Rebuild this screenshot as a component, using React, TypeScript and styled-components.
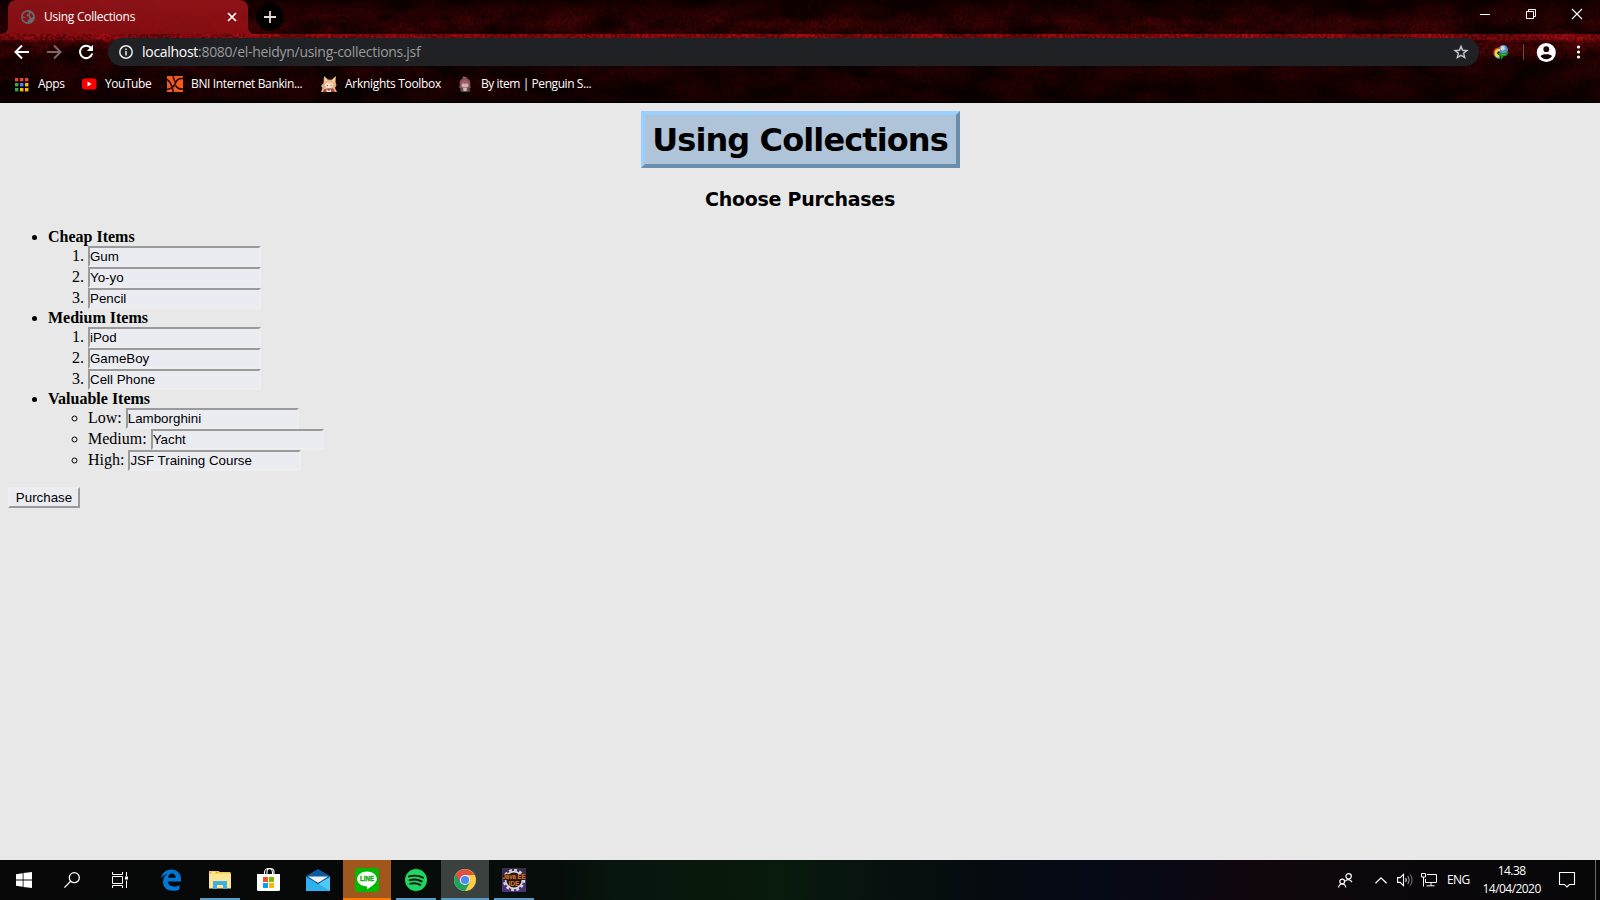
import React from 'react';
import styled, { createGlobalStyle, css } from 'styled-components';

const ui = `'Open Sans', 'Noto Sans', sans-serif`;

const GlobalStyle = createGlobalStyle`
  html, body { margin: 0; padding: 0; background: #e8e8e8; overflow: hidden; }
`;

const Screen = styled.div`
  width: 1600px;
  height: 900px;
  display: flex;
  flex-direction: column;
  overflow: hidden;
`;

/* ---------- browser frame ---------- */

const Chrome = styled.header`
  position: relative;
  isolation: isolate;
  height: 103px;
  flex: none;
  display: flex;
  flex-direction: column;
  background: linear-gradient(#1c0001 0, #440405 22px, #3c0304 34px, #a80d13 34px, #a00c12 39px, #5c0507 43px, #2e0203 60px, #220102 101px, #000 102px);
  color: #fff;
  font-family: ${ui};
`;

const Texture = styled.svg`
  position: absolute;
  inset: 0;
  z-index: -1;
  width: 1600px;
  height: 103px;
`;

const TabStrip = styled.div`
  height: 34px;
  display: flex;
  align-items: flex-start;
  padding-left: 8px;
`;

const Tab = styled.div`
  position: relative;
  box-sizing: border-box;
  width: 240px;
  height: 34px;
  padding: 0 10px 0 13px;
  display: flex;
  align-items: center;
  border-radius: 8px 8px 0 0;
  background: linear-gradient(rgba(172, 24, 29, 0.78), rgba(160, 16, 21, 0.76));
  &::before,
  &::after {
    content: '';
    position: absolute;
    bottom: 0;
    width: 6px;
    height: 6px;
  }
  &::before {
    left: -6px;
    background: radial-gradient(circle at 0 0, transparent 5.5px, #840e12 6px);
  }
  &::after {
    right: -6px;
    background: radial-gradient(circle at 100% 0, transparent 5.5px, #840e12 6px);
  }
`;

const Label = styled.span<{ $size?: number; $track?: number; $gap?: number }>`
  font-size: ${(p) => p.$size ?? 12}px;
  letter-spacing: ${(p) => p.$track ?? 0}px;
  margin-left: ${(p) => p.$gap ?? 9}px;
  line-height: 16px;
  white-space: nowrap;
`;

const Icon = styled.svg`
  display: block;
  flex: none;
  overflow: visible;
`;

const Grow = styled.div`
  flex: 1;
`;

const NewTab = styled.div`
  width: 28px;
  height: 28px;
  margin: 3px 0 0 8px;
  border-radius: 50%;
  background: #050000;
  display: grid;
  place-items: center;
`;

const WindowButtons = styled.div`
  display: flex;
  height: 28px;
  > div {
    width: 46px;
    display: grid;
    place-items: center;
  }
`;

const Toolbar = styled.div`
  height: 36px;
  display: flex;
  align-items: center;
  padding-left: 14px;
`;

const NavIcons = styled.div`
  display: flex;
  gap: 16px;
  width: 94px;
`;

const Omnibox = styled.div`
  box-sizing: border-box;
  width: 1371px;
  height: 28px;
  border-radius: 14px;
  padding: 0 11px;
  background: #202124;
  display: flex;
  align-items: center;
  em {
    font-style: normal;
    color: #9a9b9d;
  }
`;

const ToolbarEnd = styled.div`
  display: flex;
  align-items: center;
  padding-left: 14px;
`;

const Divider = styled.i`
  width: 1px;
  height: 16px;
  margin: 0 13px 0 14px;
  background: #6b4a4c;
`;

const Bookmarks = styled.nav`
  height: 28px;
  display: flex;
  align-items: center;
  padding-left: 15px;
`;

const Bookmark = styled.div<{ $width: number }>`
  display: flex;
  align-items: center;
  width: ${(p) => p.$width}px;
`;

/* ---------- page ---------- */

const Page = styled.main`
  box-sizing: border-box;
  height: 757px;
  padding: 8px;
  background: #e8e8e8;
  color: #000;
  font: 16px/18px 'Liberation Serif', 'Times New Roman', serif;
`;

const Title = styled.h1`
  box-sizing: border-box;
  width: 319px;
  height: 57px;
  margin: 0 auto;
  border: 4px solid;
  border-color: #9bcfff #6c8ead #6c8ead #9bcfff;
  background: #b0c4d9;
  font: bold 32px/51px 'DejaVu Sans', Verdana, sans-serif;
  letter-spacing: -0.9px;
  text-align: center;
  white-space: nowrap;
`;

const Subtitle = styled.h2`
  margin: 19px 0 17px;
  font: bold 19px/24px 'DejaVu Sans', Verdana, sans-serif;
  letter-spacing: -0.27px;
  text-align: center;
`;

const Groups = styled.ul`
  margin: 0 0 16px;
  padding-left: 40px;
  list-style: disc;
`;

const nested = css`
  margin: 0;
  padding-left: 40px;
  font-weight: normal;
`;
const Numbered = styled.ol`
  ${nested}
`;
const Circled = styled.ul`
  ${nested}
  list-style: circle;
`;

const GroupName = styled.b`
  display: block;
  height: 18px;
`;

const Row = styled.li`
  height: 21px;
  line-height: 20px;
`;

const Field = styled.input`
  box-sizing: border-box;
  width: 173px;
  height: 21px;
  margin: 0;
  padding: 1px 0;
  vertical-align: top;
  border: 2px solid;
  border-color: #9a9a9a #eeeeee #eeeeee #9a9a9a;
  border-radius: 0;
  background: #ebecf2;
  color: #000;
  font: 13.33px 'Liberation Sans', Arial, sans-serif;
`;

const Purchase = styled.button`
  display: block;
  box-sizing: border-box;
  width: 72px;
  height: 21px;
  padding: 0;
  border: 2px solid;
  border-color: #eeeeee #9a9a9a #9a9a9a #eeeeee;
  border-radius: 0;
  background: #ebecf2;
  color: #000;
  font: 13.33px/16px 'Liberation Sans', Arial, sans-serif;
`;

/* ---------- taskbar ---------- */

const Taskbar = styled.footer`
  height: 40px;
  flex: none;
  display: flex;
  color: #fff;
  font-family: ${ui};
  background: linear-gradient(90deg, #080808 0, #070808 320px, #060d0a 500px, #070d0a 560px, #071710 620px, #08180b 700px, #081b0c 780px, #07160f 830px, #070e0f 920px, #050b10 1000px, #060a17 1100px, #0a0913 1170px, #10060f 1240px, #0e070c 1310px, #0a070b 1420px, #080708 1600px);
`;

const SystemSlot = styled.div`
  width: 48px;
  height: 40px;
  display: grid;
  place-items: center;
`;

const Apps = styled.div`
  display: flex;
  gap: 1px;
  margin-left: 3px;
`;

const AppSlot = styled.div<{ $fill?: string; $bar?: string; $wide?: boolean }>`
  box-sizing: border-box;
  width: 48px;
  height: 40px;
  display: grid;
  place-items: center;
  background:
    ${(p) => p.$bar ? `linear-gradient(${p.$bar}, ${p.$bar}) 50% 100% / ${p.$wide ? 48 : 40}px 2px no-repeat` : 'none'}
    ${(p) => (p.$fill ? `, ${p.$fill}` : '')};
`;

const Tray = styled.div`
  display: flex;
  align-items: center;
  width: 257px;
`;

const Chevron = styled(Icon)`
  margin: 0 10px 0 22px;
`;

const Network = styled(Icon)`
  margin-left: 8px;
`;

const MenuDots = styled(Icon)`
  margin-left: 21px;
`;

const Clock = styled.div`
  width: 84px;
  height: 40px;
  margin-right: 5px;
  display: flex;
  flex-direction: column;
  align-items: center;
  font-size: 12px;
  line-height: 18px;
  padding-top: 2px;
  box-sizing: border-box;
  span:first-child { letter-spacing: -0.6px; }
  span:last-child { letter-spacing: -0.55px; }
`;

const DesktopEdge = styled.div`
  width: 4px;
  border-left: 1px solid #6c6a6c;
`;

/* ---------- drawings ---------- */

const Globe = () => (
  <Icon width="14" height="14" viewBox="0 0 14 14">
    <circle cx="7" cy="7" r="7" fill="#656b70" />
    <path d="M1.6 6.2C2 4 3.6 2.1 6 1.8c1 0 1.6.2 2.2.5L7.4 4 5.8 4.6 5.7 6l1.9.6 1.1 1.8-1.4 1.3-.5 2.4C3.7 12 1.700 9.700 1.600 7.400L4 8l.8-.7ZM10 3.100c1.200 1 2 2.300 2.200 3.600L10.600 8 9.300 6.500 8.700 5Z" fill="#8c1218" />
  </Icon>
);

const AppsGrid = () => (
  <Icon width="13" height="13" viewBox="0 0 13 13">
    {['#ea4335', '#ea4335', '#ea4335', '#34a853', '#4285f4', '#fbbc05', '#34a853', '#fbbc05', '#fbbc05'].map((c, i) => (
      <rect key={i} x={(i % 3) * 5} y={Math.floor(i / 3) * 5} width="3.400" height="3.400" fill={c} />
    ))}
  </Icon>
);

const YouTube = () => (
  <Icon width="15" height="12" viewBox="0 0 15 12">
    <rect y="0.500" width="14.500" height="11" rx="2.500" fill="#f00" />
    <path d="M5.500 3.500v5L9.700 6Z" fill="#fff" />
  </Icon>
);

const Bni = () => (
  <Icon width="16" height="16" viewBox="0 0 16 16">
    <rect width="16" height="16" fill="#f15a23" />
    <path d="M0 3.500C3 5 5 9 6.300 16M16 2.500C12 2 9.500 4 8.500 7S5 12.500 0 13.500M6 0C6.500 3 7.500 5 9 7M8.500 9.500C10.500 12.500 13 13.500 16 13" fill="none" stroke="#1c0806" strokeWidth="1.500" />
  </Icon>
);

const Fox = () => (
  <Icon width="16" height="16" viewBox="0 0 16 16">
    <path d="M3 0l4 3.500 3.500.2L15 0l-.5 6 1 3-1.500 3 2 4H0l1.500-4L0 10l2.500-3Z" fill="#e3b081" />
    <path d="M3.500 1l2.800 3.500L4 6ZM14.300 1.200l-3.600 3.500 2.500 2Z" fill="#f5d3ae" />
    <ellipse cx="8" cy="9" rx="3.800" ry="3.200" fill="#fae5d3" />
    <path d="M3.500 8Q7 2.500 12.500 8L10 7 8 8 6 7Z" fill="#f0c794" />
    <path d="M6 9h1v1.300H6ZM9.500 9h1v1.300h-1Z" fill="#9d5a43" />
    <path d="M3 13.500l4-1 5 0 2 3.500H2Z" fill="#9b4840" />
    <path d="M5.500 13l2.500 2 2-2v3H5.500Z" fill="#ead9d0" />
  </Icon>
);

const Penguin = () => (
  <Icon width="14" height="16" viewBox="0 0 14 16">
    <path d="M4.500 .5l3.500 .5 1.500 1.500H5Z" fill="#8f6c60" />
    <path d="M7 2c4 0 5.800 3 5.300 7l.4 3H1.300L1.700 9C1.200 5 3 2 7 2Z" fill="#87505a" />
    <ellipse cx="7" cy="9.300" rx="3.500" ry="2.300" fill="#d9aea8" />
    <path d="M3 8q1-4 4-4t4 4L8.500 7 7 8 5 7Z" fill="#9d6068" />
    <path d="M2.500 12h9l1 3-3 1h-5L2 15Z" fill="#5c5055" />
    <path d="M5 12h4l-.5 3h-3Z" fill="#cbbcb5" />
  </Icon>
);

const Idm = () => (
  <Icon width="16" height="15" viewBox="0 0 16 15">
    <circle cx="10.300" cy="4.800" r="4.700" fill="#5b93cc" />
    <circle cx="9.600" cy="3.300" r="2.300" fill="#c4dcee" />
    <path d="M6 5C3.500 5 2 7 2.700 9.300S5 12.300 7 12" fill="none" stroke="#2e85d2" strokeWidth="3.600" />
    <path d="M7 4.500C3.500 4.500 2 7 2.900 9.300c.5 1.400 1.800 2 3.300 2" fill="none" stroke="#f7d82c" strokeWidth="2.600" />
    <path d="M7.500 3C3 2.500.2 5.500 1 9.500" fill="none" stroke="#e0452b" strokeWidth="1.400" />
    <path d="M4.500 8 9 8.300 16 7.300 13.200 11l-3 .5-1.700 3.500L7.500 11.500Z" fill="#14951f" />
    <path d="M7 9.500l6-.7-2 1.500Z" fill="#3bcc3b" />
  </Icon>
);

const Edge = () => (
  <Icon width="20" height="22" viewBox="0 0 20 22">
    <path d="M0 9.800C.7 4.200 4.600.4 10.300.4c6 0 9.700 4.200 9.700 9.700v2.500H6.900c.2 3.200 2.700 4.900 6 4.900 2.200 0 4-.6 5.600-1.600v4.400c-1.900 1-4.100 1.500-6.500 1.500-6 0-10-3.300-10-9 0-3.500 1.900-6.500 5-8.200C4 5.400 1.500 7.100 0 9.800ZM7.200 8.800h7.500c0-2.600-1.400-4.200-3.800-4.200S7.500 6.300 7.200 8.800Z" fill="#0078d7" fillRule="evenodd" />
  </Icon>
);

const Explorer = () => (
  <Icon width="22" height="18" viewBox="0 0 22 18">
    <path d="M0 0h9.500l1.500 1h10.500v16H0Z" fill="#f3c95a" />
    <path d="M0 2.500h22V17.500H0Z" fill="#ffe695" />
    <path d="M1 .8h8v1.500H1Z" fill="#f5a623" />
    <path d="M2.500.8h4v1.500h-4Z" fill="#fff3b8" />
    <path d="M4 18v-8h14v8h-4v-4H8v4Z" fill="#3fb0e5" />
  </Icon>
);

const Store = () => (
  <Icon width="24" height="24" viewBox="0 0 24 24">
    <path d="M0 6h23v15.500a1.500 1.500 0 0 1-1.500 1.500h-20A1.500 1.500 0 0 1 0 21.500Z" fill="#fff" />
    <path d="M7.500 6V4.500a4 4 0 0 1 8 0V6M10 6V4a3.500 3.500 0 0 1 7 0v2" fill="none" stroke="#fff" strokeWidth="1.100" />
    <path d="M6 9h5v5H6Z" fill="#f25022" /><path d="M12 9h5v5h-5Z" fill="#7fba00" />
    <path d="M6 15h5v5H6Z" fill="#00a4ef" /><path d="M12 15h5v5h-5Z" fill="#ffb900" />
  </Icon>
);

const Mail = () => (
  <Icon width="24" height="22" viewBox="0 0 24 22">
    <path d="M0 7 12 0l12 7v6H0Z" fill="#0c59a4" />
    <path d="M0 8l12 7 12-7v14H0Z" fill="#28a8ea" />
    <path d="M24 8 12 15l12 7Z" fill="#50c8f8" />
    <path d="M0 22 12 15l12 7Z" fill="#31b9f3" />
    <path d="M0 8 24 22H0Z" fill="#2fb0f0" />
    <path d="M2 7.500h20L12 14Z" fill="#f0f0f0" />
  </Icon>
);

const LineLogo = () => (
  <Icon width="24" height="24" viewBox="0 0 24 24">
    <rect width="24" height="24" rx="3" fill="#00b900" />
    <path d="M12 3.500c5.500 0 9.800 3.300 9.800 7.500 0 3.200-3.100 6-9 10-.9.600-.7-.3-.5-2.400C6.500 18.300 2.200 15.200 2.200 11c0-4.200 4.300-7.500 9.800-7.500Z" fill="#fff" />
    <text x="5" y="13.400" fontSize="6.600" fontWeight="bold" fontFamily="Liberation Sans, sans-serif" fill="#00a900" stroke="#00a900" strokeWidth="0.300" textLength="14" lengthAdjust="spacingAndGlyphs">LINE</text>
  </Icon>
);

const Spotify = () => (
  <Icon width="22" height="22" viewBox="0 0 22 22">
    <circle cx="11" cy="11" r="11" fill="#1ed760" />
    <path d="M4 7.500q7.500-2.200 14 1.200M4.700 11.200q6.500-1.800 12 1.200M5.300 14.700q5.500-1.400 10 1.100" fill="none" stroke="#07150d" strokeWidth="1.900" strokeLinecap="round" />
  </Icon>
);

const ChromeLogo = () => (
  <Icon width="22" height="22" viewBox="0 0 22 22">
    <circle cx="11" cy="11" r="11" fill="#ffcd46" />
    <path d="M11 11 1.500 5.500A11 11 0 0 0 11 22l4.800-8.200Z" fill="#1da462" />
    <path d="M1.500 5.500A11 11 0 0 1 20.500 6H11v5L6.500 13.800Z" fill="#dd5144" />
    <circle cx="11" cy="11" r="5.100" fill="#f1f1f1" />
    <circle cx="11" cy="11" r="4.100" fill="#4c8bf5" />
  </Icon>
);

const JavaEE = () => (
  <Icon width="24" height="24" viewBox="0 0 24 24">
    <rect width="24" height="24" rx="1" fill="#4b3272" />
    <rect width="24" height="12" rx="1" fill="#3b2d49" />
    <circle cx="12" cy="12" r="10" fill="none" stroke="#d8d5dc" strokeWidth="2.400" strokeDasharray="2.800 2.430" />
    <circle cx="12" cy="12" r="8.400" fill="#1b1519" stroke="#d8d5dc" strokeWidth="1.600" />
    <rect x="1" y="6" width="22" height="6" fill="#2a1a18" />
    <g fill="#e07a22" fontFamily="Liberation Sans, sans-serif" fontWeight="bold">
      <text x="0.500" y="11.300" fontSize="7.500" textLength="23" lengthAdjust="spacingAndGlyphs">Java EE</text>
      <text x="6.500" y="18" fontSize="7.800" textLength="11" lengthAdjust="spacingAndGlyphs">IDE</text>
    </g>
  </Icon>
);

const groups = [
  { name: 'Cheap Items', items: ['Gum', 'Yo-yo', 'Pencil'] },
  { name: 'Medium Items', items: ['iPod', 'GameBoy', 'Cell Phone'] },
];
const valuable = [
  ['Low', 'Lamborghini'],
  ['Medium', 'Yacht'],
  ['High', 'JSF Training Course'],
];

export default function App() {
  return (
    <Screen>
      <GlobalStyle />
      <Chrome>
        <Texture aria-hidden="true">
          <filter id="folds" x="0" y="0" width="100%" height="100%">
            <feTurbulence type="fractalNoise" baseFrequency="0.022 0.05" numOctaves="5" seed="8" />
            <feColorMatrix values="0 0 0 0 0  0 0 0 0 0  0 0 0 0 0  2 1 0 0 -1.100" />
          </filter>
          <filter id="grain" x="0" y="0" width="100%" height="100%">
            <feTurbulence type="fractalNoise" baseFrequency="0.350" numOctaves="3" seed="3" />
            <feColorMatrix values="0 0 0 0 0  0 0 0 0 0  0 0 0 0 0  2.400 0 0 0 -0.850" />
          </filter>
          <rect width="1600" height="34" filter="url(#folds)" opacity="0.700" />
          <rect y="34" width="1600" height="6" filter="url(#folds)" opacity="0.300" />
          <rect y="40" width="1600" height="63" filter="url(#folds)" opacity="0.700" />
          <rect width="1600" height="103" filter="url(#grain)" opacity="0.500" />
        </Texture>
        <TabStrip>
          <Tab>
            <Globe />
            <Label $track={-0.25}>Using Collections</Label>
            <Grow />
            <Icon width="12" height="12" viewBox="0 0 12 12"><path d="M2 2l8 8M10 2l-8 8" stroke="#fff" strokeWidth="1.700" /></Icon>
          </Tab>
          <NewTab>
            <Icon width="12" height="12" viewBox="0 0 12 12"><path d="M6 0v12M0 6h12" stroke="#ddd" strokeWidth="1.800" /></Icon>
          </NewTab>
          <Grow />
          <WindowButtons>
            <div><Icon width="10" height="10" viewBox="0 0 10 10"><path d="M0 5.500h10" stroke="#fff" /></Icon></div>
            <div><Icon width="10" height="10" viewBox="0 0 10 10"><path d="M.5 2.500h7v7h-7ZM2.500 2.500v-2h7v7h-2" stroke="#fff" fill="none" /></Icon></div>
            <div><Icon width="10" height="10" viewBox="0 0 10 10"><path d="M0 0l10 10M10 0L0 10" stroke="#fff" strokeWidth="1.100" /></Icon></div>
          </WindowButtons>
        </TabStrip>
        <Toolbar>
          <NavIcons>
            <Icon width="16" height="16" viewBox="0 0 16 16"><path d="M15 8H2M8 1.500 1.500 8 8 14.500" stroke="#fff" strokeWidth="2" fill="none" /></Icon>
            <Icon width="16" height="16" viewBox="0 0 16 16"><path d="M1 8h13M8 1.500 14.500 8 8 14.500" stroke="#7b6a6b" strokeWidth="2" fill="none" /></Icon>
            <Icon width="16" height="16" viewBox="0 0 16 16"><path d="M13.400 4.500A6.200 6.200 0 1 0 14.200 9.500" stroke="#fff" strokeWidth="2" fill="none" /><path d="M15 .8v6.200H8.800Z" fill="#fff" /></Icon>
          </NavIcons>
          <Omnibox>
            <Icon width="14" height="14" viewBox="0 0 14 14"><circle cx="7" cy="7" r="6.200" fill="none" stroke="#e8eaed" strokeWidth="1.500" /><path d="M7 6v4.500M7 3.400v1.600" stroke="#e8eaed" strokeWidth="1.500" /></Icon>
            <Label $size={14} $track={-0.29}>localhost<em>:8080/el-heidyn/using-collections.jsf</em></Label>
            <Grow />
            <Icon width="14" height="14" viewBox="0 0 14 14"><path d="M7 1.300 8.600 5.300 12.900 5.600 9.600 8.300 10.700 12.600 7 10.300 3.300 12.600 4.400 8.300 1.100 5.600 5.400 5.300Z" stroke="#c8c9cb" strokeWidth="1.400" fill="none" /></Icon>
          </Omnibox>
          <ToolbarEnd>
            <Idm />
            <Divider />
            <Icon width="19" height="19" viewBox="0 0 19 19"><circle cx="9.300" cy="9.500" r="9.500" fill="#fff" /><circle cx="9.300" cy="6.200" r="2.900" fill="#180102" /><path d="M3.600 13.300c1.300-2.600 10.100-2.600 11.400 0-2.800 4-8.600 4-11.400 0Z" fill="#180102" /></Icon>
            <MenuDots width="4" height="14" viewBox="0 0 4 14"><g fill="#fff"><circle cx="1.500" cy="2" r="1.600" /><circle cx="1.500" cy="7" r="1.600" /><circle cx="1.500" cy="12" r="1.600" /></g></MenuDots>
          </ToolbarEnd>
        </Toolbar>
        <Bookmarks>
          <Bookmark $width={67}><AppsGrid /><Label $gap={10} $track={-0.3}>Apps</Label></Bookmark>
          <Bookmark $width={85}><YouTube /><Label $gap={8} $track={-0.45}>YouTube</Label></Bookmark>
          <Bookmark $width={154}><Bni /><Label $gap={8} $track={-0.36}>BNI Internet Bankin...</Label></Bookmark>
          <Bookmark $width={137}><Fox /><Label $gap={8} $track={-0.3}>Arknights Toolbox</Label></Bookmark>
          <Bookmark $width={140}><Penguin /><Label $gap={9} $track={-0.43}>By item | Penguin S...</Label></Bookmark>
        </Bookmarks>
      </Chrome>

      <Page>
        <Title>Using Collections</Title>
        <Subtitle>Choose Purchases</Subtitle>
        <Groups>
          {groups.map((g) => (
            <li key={g.name}>
              <GroupName>{g.name}</GroupName>
              <Numbered>
                {g.items.map((item) => (
                  <Row key={item}><Field defaultValue={item} /></Row>
                ))}
              </Numbered>
            </li>
          ))}
          <li>
            <GroupName>Valuable Items</GroupName>
            <Circled>
              {valuable.map(([level, item]) => (
                <Row key={level}>{level}: <Field defaultValue={item} /></Row>
              ))}
            </Circled>
          </li>
        </Groups>
        <Purchase>Purchase</Purchase>
      </Page>

      <Taskbar>
        <SystemSlot><Icon width="16" height="16" viewBox="0 0 16 16"><path d="M0 2.200 6.700 1.200v6.300H0ZM7.500 1.100 16 0v7.500H7.500ZM0 8.400h6.700v6.400L0 13.800ZM7.500 8.400H16V16l-8.500-1.100Z" fill="#fff" /></Icon></SystemSlot>
        <SystemSlot><Icon width="16" height="16" viewBox="0 0 16 16"><circle cx="10.300" cy="5.700" r="5" fill="none" stroke="#fff" strokeWidth="1.300" /><path d="M6.700 9.300.4 15.600" stroke="#fff" strokeWidth="1.300" /></Icon></SystemSlot>
        <SystemSlot><Icon width="16" height="16" viewBox="0 0 16 16"><path d="M.5 0v2.500h10V0M.5 16v-2.500h10V16M.5 4.500h10v7H.5ZM14.500 0v4M14.500 8.500V16" fill="none" stroke="#fff" /><path d="M13 4.500h3v3h-3Z" fill="#fff" /></Icon></SystemSlot>
        <Apps>
          <AppSlot><Edge /></AppSlot>
          <AppSlot $bar="#5a9bc7"><Explorer /></AppSlot>
          <AppSlot><Store /></AppSlot>
          <AppSlot><Mail /></AppSlot>
          <AppSlot $fill="#a0571d" $bar="#ff7800" $wide><LineLogo /></AppSlot>
          <AppSlot $bar="#5a9bc7"><Spotify /></AppSlot>
          <AppSlot $fill="#3b413e" $bar="#5a9bc7" $wide><ChromeLogo /></AppSlot>
          <AppSlot $bar="#5a9bc7"><JavaEE /></AppSlot>
        </Apps>
        <Grow />
        <Tray>
          <Icon width="15" height="15" viewBox="0 0 15 15"><g fill="none" stroke="#fff" strokeWidth="1.200"><circle cx="10.600" cy="3.300" r="2.700" /><circle cx="4.200" cy="8.600" r="2.400" /><path d="M7.300 8.200q3-3.400 6.700.8M.6 14.500q.5-3.500 3.600-3.500t3.600 3.500" /></g></Icon>
          <Chevron width="12" height="7" viewBox="0 0 12 7"><path d="M.5 6.300 6 .9l5.500 5.400" fill="none" stroke="#fff" strokeWidth="1.300" /></Chevron>
          <Icon width="16" height="14" viewBox="0 0 16 14"><path d="M.6 4.600h2.600L6.500 1.300v11.400L3.200 9.400H.6Z" fill="none" stroke="#fff" strokeWidth="1.100" /><path d="M8.600 5q1.500 2 0 4" fill="none" stroke="#fff" /><path d="M10.800 3q3 4 0 8" fill="none" stroke="#aaa" /><path d="M13 1.200q4.200 5.800 0 11.600" fill="none" stroke="#777" /></Icon>
          <Network width="16" height="14" viewBox="0 0 16 14"><path d="M6 1.500h9.500v8h-11V6M10 9.500v3M5.500 12.800h8M.5.500h4v3.500h-4ZM2.500 4v9.500" fill="none" stroke="#fff" /></Network>
          <Label $gap={10} $track={-0.6}>ENG</Label>
          <Clock><span>14.38</span><span>14/04/2020</span></Clock>
          <Icon width="16" height="16" viewBox="0 0 16 16"><path d="M.5.500h15v12H10.500L8 15l-2.500-2.500h-5Z" fill="none" stroke="#fff" strokeWidth="1.100" /></Icon>
        </Tray>
        <DesktopEdge />
      </Taskbar>
    </Screen>
  );
}
